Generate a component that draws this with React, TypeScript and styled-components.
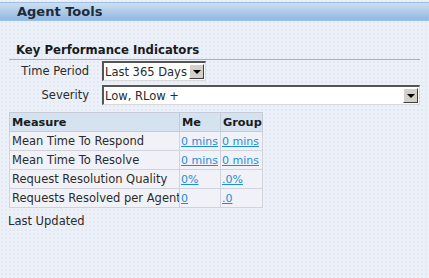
import React from "react";
import styled, { createGlobalStyle } from "styled-components";

const Global = createGlobalStyle`
  html, body { margin: 0; padding: 0; }
  body {
    width: 429px;
    height: 278px;
    overflow: hidden;
    font-family: "DejaVu Sans", Verdana, sans-serif;
    font-size: 11.5px;
    color: #2b2b2b;
    background-color: #eef0f8;
    background-image: radial-gradient(circle, #d6e4f5 0.6px, transparent 0.9px);
    background-size: 4px 4px;
  }
`;

const Page = styled.div`
  display: flex;
  flex-direction: column;
  padding-top: 2px;
`;

const Header = styled.div`
  height: 17px;
  border-top: 1px solid #9ec0e6;
  border-bottom: 1px solid #9ec0e6;
  background: linear-gradient(#cddff1, #8fb8e1);
  display: flex;
  align-items: center;
  padding-left: 17px;
  font-weight: bold;
  font-size: 13px;
  color: #1d2b3a;
`;

const Section = styled.div`
  padding: 22px 9px 0 9px;
  display: flex;
  flex-direction: column;
`;

const SectionTitle = styled.div`
  font-weight: bold;
  font-size: 11.7px;
  color: #1a1a1a;
  padding-left: 7px;
  padding-bottom: 1px;
  border-bottom: 1px solid #8fb5dc;
  line-height: 15px;
`;

const FormGrid = styled.div`
  display: grid;
  grid-template-columns: 80px auto;
  column-gap: 13px;
  row-gap: 4px;
  margin-top: 1px;
  align-items: center;
`;

const Label = styled.div`
  text-align: right;
  color: #2b2b2b;
`;

const Select = styled.div<{ $w: number }>`
  width: ${(p) => p.$w}px;
  height: 20px;
  box-sizing: border-box;
  background: #fff;
  border-top: 2px solid #555;
  border-left: 2px solid #555;
  border-right: 1px solid #d8d8d8;
  border-bottom: 1px solid #d8d8d8;
  display: flex;
  align-items: center;
  justify-content: space-between;
  padding-left: 1px;
  white-space: nowrap;
`;

const Arrow = styled.div`
  width: 15px;
  height: 15px;
  margin-right: 1px;
  flex: none;
  background: #d4d0c8;
  border-top: 1px solid #fff;
  border-left: 1px solid #fff;
  border-right: 1px solid #404040;
  border-bottom: 1px solid #404040;
  box-sizing: border-box;
  display: flex;
  align-items: center;
  justify-content: center;
  &::after {
    content: "";
    border-left: 4px solid transparent;
    border-right: 4px solid transparent;
    border-top: 4px solid #000;
  }
`;

const Table = styled.table`
  margin-top: 7px;
  border-collapse: collapse;
  border: 1px solid #c6cbd8;
  table-layout: fixed;
  width: 254px;
`;

const Col = styled.col<{ $w: number }>`
  width: ${(p) => p.$w}px;
`;

const Th = styled.th`
  background: #d5e3f1;
  text-align: left;
  font-weight: bold;
  font-size: 11.3px;
  color: #1a1a1a;
  height: 18px;
  padding: 0 1px 0 2px;
  border: 1px solid #c6cbd8;
`;

const Td = styled.td`
  height: 18px;
  padding: 0 0 0 2px;
  border: 1px solid #d0d3dd;
  background: #f1f2f8;
  white-space: nowrap;
  overflow: hidden;
`;

const ValueTd = styled(Td)`
  padding-left: 1px;
`;

const Link = styled.a`
  color: #1e8ed8;
  font-size: 11px;
  text-decoration: underline;
`;

const Updated = styled.div`
  margin-top: 6px;
  margin-left: -1px;
`;

const rows: [string, string, string][] = [
  ["Mean Time To Respond", "0 mins", "0 mins"],
  ["Mean Time To Resolve", "0 mins", "0 mins"],
  ["Request Resolution Quality", "0%", ".0%"],
  ["Requests Resolved per Agent", "0", ".0"],
];

export default function App() {
  return (
    <>
      <Global />
      <Page>
        <Header>Agent Tools</Header>
        <Section>
          <SectionTitle>Key Performance Indicators</SectionTitle>
          <FormGrid>
            <Label>Time Period</Label>
            <Select $w={104}>
              <span>Last 365 Days</span>
              <Arrow />
            </Select>
            <Label>Severity</Label>
            <Select $w={318}>
              <span>Low, RLow +</span>
              <Arrow />
            </Select>
          </FormGrid>
          <Table>
            <colgroup>
              <Col $w={170} />
              <Col $w={41} />
              <Col $w={42} />
            </colgroup>
            <thead>
              <tr>
                <Th>Measure</Th>
                <Th>Me</Th>
                <Th>Group</Th>
              </tr>
            </thead>
            <tbody>
              {rows.map((r) => (
                <tr key={r[0]}>
                  <Td>{r[0]}</Td>
                  <ValueTd><Link href="#">{r[1]}</Link></ValueTd>
                  <ValueTd><Link href="#">{r[2]}</Link></ValueTd>
                </tr>
              ))}
            </tbody>
          </Table>
          <Updated>Last Updated</Updated>
        </Section>
      </Page>
    </>
  );
}
